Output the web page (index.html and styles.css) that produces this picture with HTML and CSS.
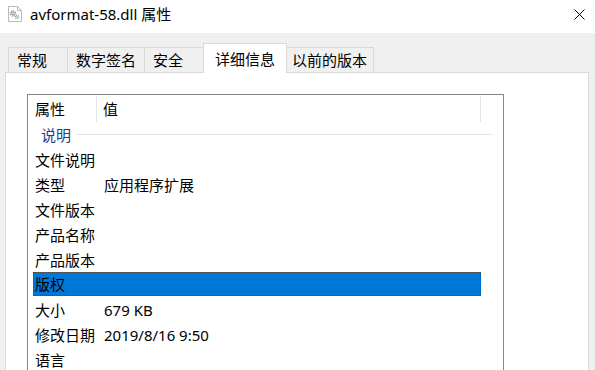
FILE: index.html
```html
<!DOCTYPE html>
<html lang="zh-CN">
<head>
<meta charset="utf-8">
<title>avformat-58.dll 属性</title>
<link rel="stylesheet" href="styles.css">
</head>
<body>
<div class="window">
  <header class="titlebar">
    <svg class="file-icon" viewBox="0 0 14 16" aria-hidden="true">
      <path d="M0.5 0.5H9.5L13.5 4.5V15.5H0.5Z" fill="#fff" stroke="#b9b9b9"/>
      <path d="M9.5 0.5V4.5H13.5" fill="none" stroke="#b9b9b9"/>
      <circle cx="5" cy="7.5" r="2.6" fill="none" stroke="#9a9a9a" stroke-width="1.4" stroke-dasharray="1.1 0.9"/>
      <circle cx="5" cy="7.5" r="1.4" fill="none" stroke="#8a8a8a" stroke-width="1"/>
      <circle cx="9" cy="11" r="1.8" fill="none" stroke="#9a9a9a" stroke-width="1.2" stroke-dasharray="0.9 0.8"/>
      <circle cx="9" cy="11" r="0.8" fill="#8a8a8a"/>
    </svg>
    <span class="title">avformat-58.dll 属性</span>
    <svg class="close" viewBox="0 0 11 11" aria-hidden="true">
      <path d="M0.5 0.5L10.5 10.5M10.5 0.5L0.5 10.5" stroke="#000" stroke-width="1" fill="none"/>
    </svg>
  </header>

  <div class="content">
    <nav class="tabs">
      <div class="tab">常规</div>
      <div class="tab">数字签名</div>
      <div class="tab">安全</div>
      <div class="tab active">详细信息</div>
      <div class="tab tab-wide">以前的版本</div>
    </nav>

    <section class="panel">
      <div class="list">
        <div class="list-head">
          <div class="hcell hname">属性</div>
          <div class="hcell hvalue">值</div>
        </div>
        <div class="group"><span class="group-label">说明</span><span class="group-rule"></span></div>
        <div class="row"><span class="name">文件说明</span><span class="value"></span></div>
        <div class="row"><span class="name">类型</span><span class="value">应用程序扩展</span></div>
        <div class="row"><span class="name">文件版本</span><span class="value"></span></div>
        <div class="row"><span class="name">产品名称</span><span class="value"></span></div>
        <div class="row"><span class="name">产品版本</span><span class="value"></span></div>
        <div class="row selected"><span class="name">版权</span><span class="value"></span></div>
        <div class="row"><span class="name">大小</span><span class="value">679 KB</span></div>
        <div class="row"><span class="name">修改日期</span><span class="value">2019/8/16 9:50</span></div>
        <div class="row"><span class="name">语言</span><span class="value"></span></div>
      </div>
    </section>
  </div>
</div>
</body>
</html>
```

FILE: styles.css
```css
html, body {
  margin: 0;
  padding: 0;
}

body {
  width: 595px;
  height: 370px;
  overflow: hidden;
  background: #f0f0f0;
  font-family: "Noto Sans", "Noto Sans CJK SC", sans-serif;
  font-size: 15px;
  color: #000;
}

.window {
  display: flex;
  flex-direction: column;
  height: 370px;
}

/* title bar */
.titlebar {
  height: 33px;
  box-sizing: border-box;
  background: #fff;
  display: flex;
  align-items: center;
  padding: 0 10px 6px 8px;
  flex: none;
}

.file-icon {
  width: 14px;
  height: 16px;
  margin-right: 8px;
  flex: none;
}

.title {
  flex: 1;
  line-height: 20px;
  white-space: nowrap;
}

.close {
  width: 11px;
  height: 11px;
  align-self: flex-start;
  margin-top: 9px;
  flex: none;
}

/* tabs */
.content {
  flex: 1;
  display: flex;
  flex-direction: column;
  min-height: 0;
}

.tabs {
  display: flex;
  align-items: flex-end;
  padding: 10px 0 0 8px;
  flex: none;
}

.tab {
  box-sizing: border-box;
  height: 25px;
  min-width: 60px;
  padding: 0 8px 0 8px;
  border: 1px solid #d9d9d9;
  border-bottom: none;
  margin-right: -1px;
  background: #f0f0f0;
  display: flex;
  align-items: center;
  line-height: 20px;
  white-space: nowrap;
}

.tab-wide {
  padding: 0 6px 0 5px;
}

.tab.active {
  height: 30px;
  margin-bottom: -1px;
  padding: 0 11px;
  background: #fff;
  position: relative;
  z-index: 1;
}

/* panel */
.panel {
  flex: 1;
  box-sizing: border-box;
  width: 584px;
  margin-left: 5px;
  background: #fff;
  border: 1px solid #d9d9d9;
  border-bottom: none;
  padding: 21px 0 0 21px;
  overflow: hidden;
}

.list {
  box-sizing: border-box;
  width: 477px;
  height: 400px;
  border: 1px solid #828790;
}

.list-head {
  display: flex;
  height: 27px;
}

.hcell {
  box-sizing: border-box;
  height: 26px;
  margin-top: 1px;
  border-right: 1px solid #e5e5e5;
  line-height: 20px;
  padding-top: 3px;
}

.hname {
  width: 69px;
  padding-left: 7px;
}

.hvalue {
  width: 384px;
  padding-left: 6px;
}

.group {
  display: flex;
  align-items: center;
  height: 25px;
  padding: 0 10px 0 13px;
}

.group-label {
  color: #1e3c8f;
  line-height: 20px;
  margin-right: 5px;
}

.group-rule {
  flex: 1;
  height: 1px;
  background: #e1e6ec;
}

.row {
  box-sizing: border-box;
  display: flex;
  align-items: center;
  height: 25px;
  width: 448px;
  margin-left: 5px;
  line-height: 20px;
  white-space: nowrap;
}

.row .name {
  width: 69px;
  padding-left: 2px;
  flex: none;
}

.row.selected {
  height: 24px;
  margin-bottom: 1px;
  background: #0078d7;
  border: 1px dotted #4a4a4a;
}

.row.selected .name {
  padding-left: 1px;
  width: 68px;
}
```
